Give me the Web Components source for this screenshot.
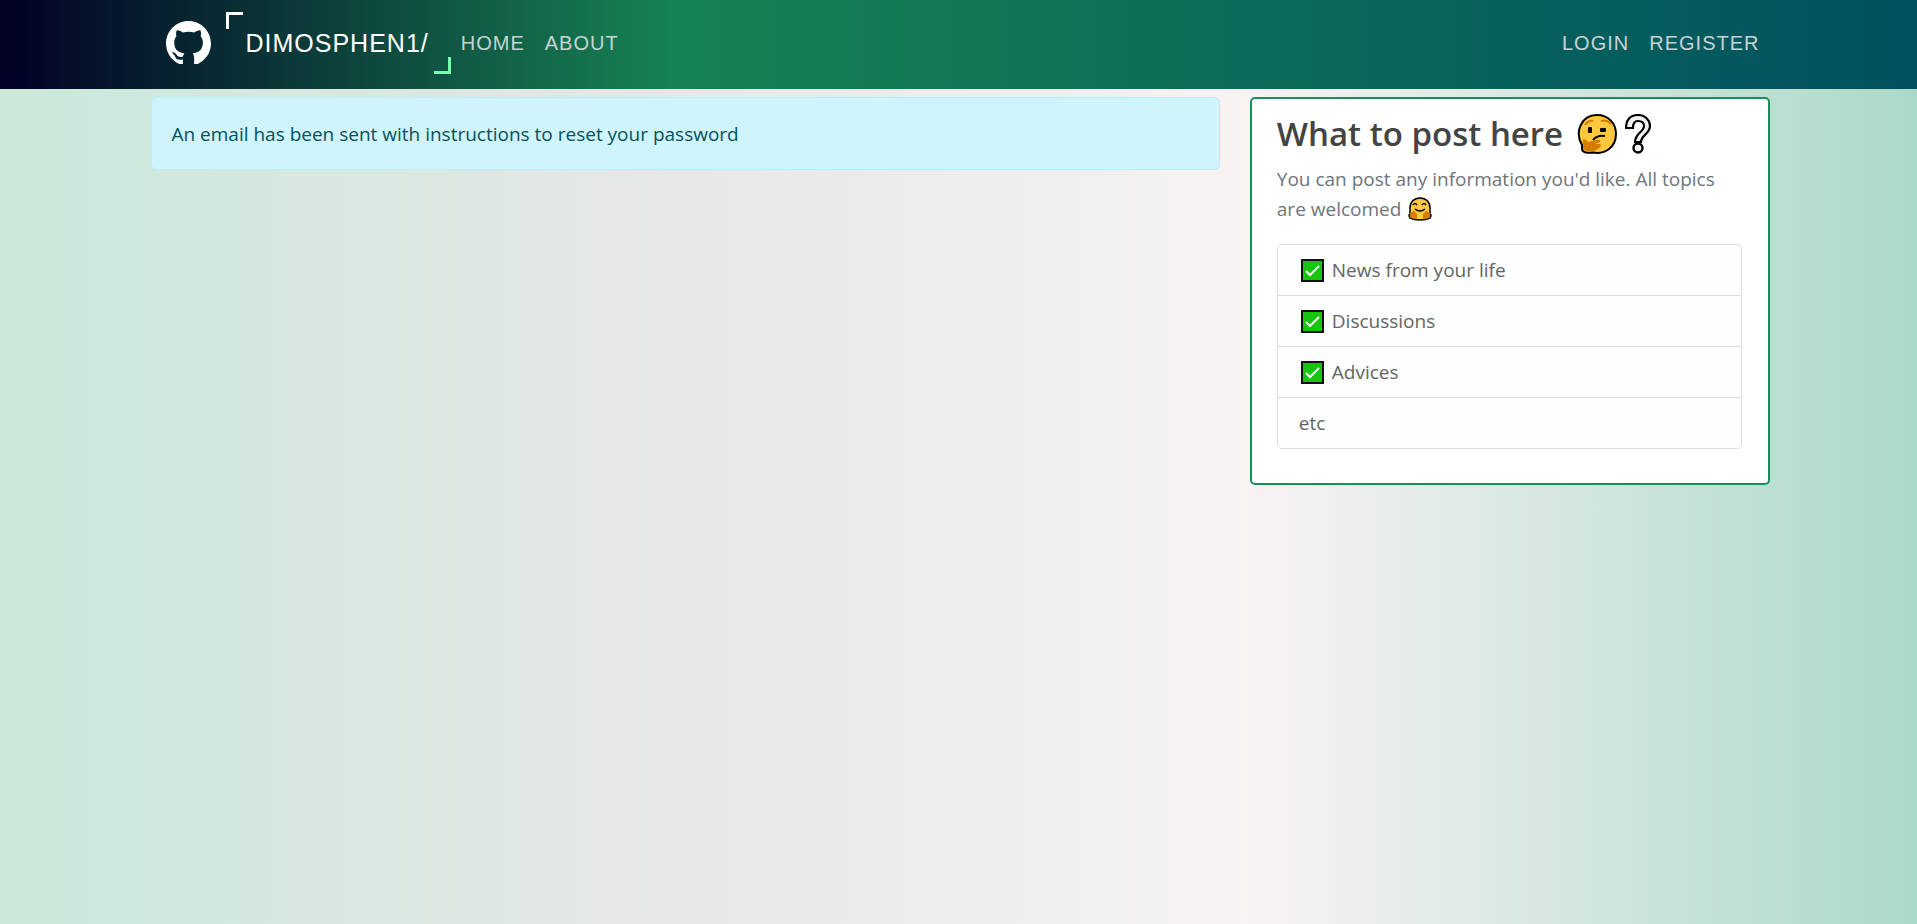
<!DOCTYPE html>
<html lang="en">
<head>
<meta charset="utf-8">
<meta name="viewport" content="width=device-width, initial-scale=1">
<title>Dimosphen1</title>
<style>
  html { min-height: 100%; }
  body {
    margin: 0;
    min-height: 100vh;
    font: 19px/30px "Segoe UI", "Open Sans", "Noto Sans", sans-serif;
    color: #212529;
    background: linear-gradient(90deg, #cbe8db 0%, #cbe8db 3%, #e7e7e7 35%, #f0f0f0 57%, #f9f3f2 65%, #abd9c8 100%);
  }
</style>
</head>
<body>
<blog-page></blog-page>
<script>
const define = (name, html) => {
  const template = document.createElement('template');
  template.innerHTML = html;
  customElements.define(name, class extends HTMLElement {
    constructor() {
      super();
      this.attachShadow({ mode: 'open' }).append(template.content.cloneNode(true));
    }
  });
};

define('github-mark', `
  <style>:host { display: block; } svg { display: block; width: 45px; height: 43px; }</style>
  <svg viewBox="0 0 16 15.300" fill="#fff" role="img" aria-label="GitHub"><path d="M8 0C3.58 0 0 3.58 0 8c0 3.54 2.29 6.53 5.47 7.59.4.07.55-.17.55-.38 0-.19-.01-.82-.01-1.49-2.01.37-2.53-.49-2.69-.94-.09-.23-.48-.94-.82-1.13-.28-.15-.68-.52-.01-.53.63-.01 1.08.58 1.23.82.72 1.21 1.87.87 2.33.66.07-.52.28-.87.51-1.07-1.78-.2-3.64-.89-3.64-3.95 0-.87.31-1.59.82-2.15-.08-.2-.36-1.02.08-2.12 0 0 .67-.21 2.2.82.64-.18 1.32-.27 2-.27s1.36.09 2 .27c1.53-1.04 2.2-.82 2.2-.82.44 1.1.16 1.92.08 2.12.51.56.82 1.27.82 2.15 0 3.07-1.87 3.75-3.65 3.95.29.25.54.73.54 1.48 0 1.07-.01 1.93-.01 2.2 0 .21.15.46.55.38A8.01 8.01 0 0 0 16 8c0-4.42-3.58-8-8-8z"/></svg>`);

define('site-brand', `
  <style>
    :host { display: block; }
    a {
      display: block; position: relative; padding: 16px 22px 16px 20px; color: #fff;
      font-size: 25px; line-height: 30px; letter-spacing: 1px; text-decoration: none; white-space: nowrap;
    }
    a::before, a::after { content: ""; position: absolute; width: 14px; height: 14px; }
    a::before { top: 0; left: 0; border-top: 3px solid #fff; border-left: 3px solid #fff; }
    a::after { right: 0; bottom: 0; border-bottom: 3px solid #76ffb4; border-right: 3px solid #76ffb4; }
  </style>
  <a href="#home"><slot></slot></a>`);

define('nav-item', `
  <style>
    :host { display: block; }
    a { display: block; padding: 10px; color: #c7d3d4; font-size: 20px; line-height: 30px; letter-spacing: 1px; text-decoration: none; }
    a:hover { color: #fff; }
  </style>
  <a href="#"><slot></slot></a>`);

define('site-header', `
  <style>
    :host {
      display: block;
      font-family: "Liberation Sans", Arial, sans-serif;
      background: linear-gradient(90deg, #020024 0%, #178253 35%, #005160 100%);
    }
    nav {
      box-sizing: border-box; max-width: 1622px; min-height: 89px; margin: 0 auto; padding: 0 0 4px 18px;
      display: flex; align-items: center;
    }
    site-brand { margin-left: 15px; }
    .links { display: flex; }
    .account { margin-left: auto; }
  </style>
  <nav aria-label="Main">
    <github-mark></github-mark>
    <site-brand>DIMOSPHEN1/</site-brand>
    <div class="links"><nav-item>HOME</nav-item><nav-item>ABOUT</nav-item></div>
    <div class="links account"><nav-item>LOGIN</nav-item><nav-item>REGISTER</nav-item></div>
  </nav>`);

define('info-alert', `
  <style>
    :host {
      display: block; padding: 21px 20px 20px; color: #055160;
      background: #cff4fc; border: 1px solid #b6effb; border-radius: 5px;
    }
  </style>
  <div role="alert"><slot></slot></div>`);

define('emoji-thinking', `
  <style>:host { display: inline-block; } svg { display: block; width: 40px; height: 40px; }</style>
  <svg viewBox="0 0 40 40" role="img" aria-label="thinking face">
    <path d="M5 31C-3 17 5 1 20 1c11 0 19 8 19 19 0 13-11 21-23 18.500C11 39 5 39 5 35z" fill="#ffc83d" stroke="#000" stroke-width="2"/>
    <path d="M6 26q3-2 4 1l1 1 8-2q5-1 4 2l-5 2h5q2 1 0 3l-2 2q-5 3-11 2-4 0-4-4z" fill="#d67d00"/>
    <path d="M8 11q4-5 8-4M24 7q6-2 10 3" fill="none" stroke="#d67d00" stroke-width="2"/>
    <path d="M16 26q4-5 12-4" fill="none" stroke="#000" stroke-width="2"/>
    <rect x="11" y="13" width="4" height="6" rx="1"/><rect x="23" y="14" width="6" height="4" rx="1"/>
  </svg>`);

define('emoji-question', `
  <style>:host { display: inline-block; } svg { display: block; width: 26px; height: 40px; }</style>
  <svg viewBox="0 0 26 40" role="img" aria-label="question mark">
    <path d="M1 14C1 5 6 1 13 1s12 5 12 11c0 8-9 9-9 16h-6c0-9 9-10 9-16 0-4-3-5-6-5s-5 2-5 7z" fill="#f2f2f2" stroke="#000" stroke-width="2.200"/>
    <circle cx="13" cy="34" r="4.500" fill="#f2f2f2" stroke="#000" stroke-width="2.400"/>
  </svg>`);

define('emoji-hug', `
  <style>:host { display: inline-block; margin-left: 2px; vertical-align: -5px; } svg { display: block; width: 24px; height: 24px; }</style>
  <svg viewBox="0 0 24 24" role="img" aria-label="hugging face">
    <path d="M2 17V11C2 5 6 1 12 1s10 4 10 10v6q2 1 0 4-4 2-10 2T2 21q-2-3 0-4z" fill="#ffc83d" stroke="#000" stroke-width="1.500"/>
    <path d="M2 16l4-2 3 3v5q-5 0-7-2zM22 16l-4-2-3 3v5q5 0 7-2z" fill="#d67d00"/>
    <path d="M5 8q2-3 4 0M14 8q2-3 4 0M7 12q5 4 10 0" fill="none" stroke="#000" stroke-width="1.500"/>
  </svg>`);

define('emoji-check', `
  <style>:host { display: block; } svg { display: block; width: 23px; height: 23px; }</style>
  <svg viewBox="0 0 23 23" role="img" aria-label="check">
    <rect x="1" y="1" width="21" height="21" fill="#16c60c" stroke="#111" stroke-width="2"/>
    <path d="M5 12l4 4 9-9" fill="none" stroke="#fff" stroke-width="2"/>
  </svg>`);

define('topic-list', `
  <style>
    :host { display: block; border: 1px solid #dddede; border-radius: 5px; background: #fefefe; color: #636464; }
    ul { list-style: none; margin: 0; padding: 0; }
    li { display: flex; align-items: center; gap: 8px; padding: 10px 21px; }
    li + li { border-top: 1px solid #dddede; }
    emoji-check { margin-left: 2px; }
  </style>
  <ul>
    <li><emoji-check></emoji-check>News from your life</li>
    <li><emoji-check></emoji-check>Discussions</li>
    <li><emoji-check></emoji-check>Advices</li>
    <li>etc</li>
  </ul>`);

define('info-card', `
  <style>
    :host { display: block; padding: 14px 26px 34px 25px; background: #fff; border: 2px solid #16905a; border-radius: 5px; }
    h2 { display: flex; align-items: center; margin: 0 0 9px; color: #444; font-size: 33px; line-height: 42px; font-weight: 600; white-space: nowrap; }
    emoji-thinking { margin-left: 14px; }
    emoji-question { margin-left: 8px; }
    p { margin: 0 0 20px; color: #6c757d; }
  </style>
  <h2>What to post here<emoji-thinking></emoji-thinking><emoji-question></emoji-question></h2>
  <p>You can post any information you'd like. All topics are welcomed <emoji-hug></emoji-hug></p>
  <topic-list></topic-list>`);

define('blog-page', `
  <style>
    :host { display: block; }
    main {
      box-sizing: border-box; max-width: 1622px; margin: 8px auto 0; padding-left: 3px;
      display: grid; grid-template-columns: minmax(0, 1070fr) minmax(0, 520fr); gap: 30px; align-items: start;
    }
    @media (max-width: 900px) { main { grid-template-columns: 1fr; } }
  </style>
  <site-header></site-header>
  <main>
    <info-alert>An email has been sent with instructions to reset your password</info-alert>
    <info-card></info-card>
  </main>`);
</script>
</body>
</html>
